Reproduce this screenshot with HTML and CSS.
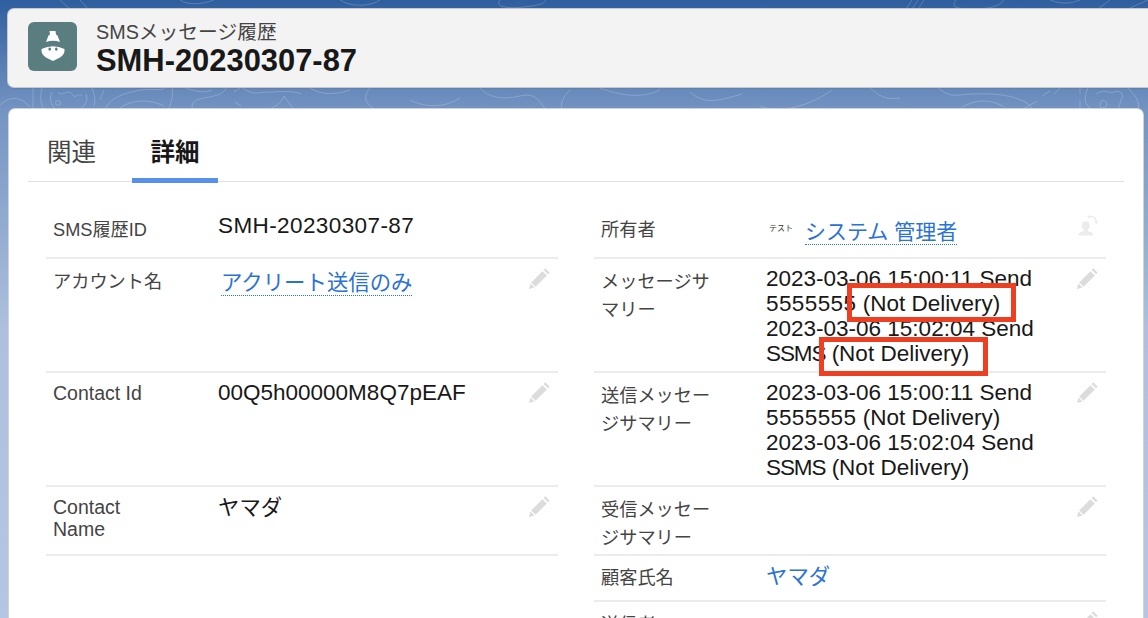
FILE: index.html
```html
<!DOCTYPE html>
<html lang="ja">
<head>
<meta charset="utf-8">
<title>SMH-20230307-87</title>
<link rel="stylesheet" href="styles.css">
</head>
<body>
<svg class="topo" viewBox="0 0 1148 120" aria-hidden="true">
  <g fill="none" stroke="#ffffff" stroke-opacity=".2" stroke-width="1">
    <path d="M0 105c8-8 20-10 30 2M33 88v20M42 88c-2 8-2 14 2 22"/>
    <path d="M52 92c-4 8 0 20 14 20s24-8 20-18M58 92c4 6 10-4 14 2s6-2 10 2"/>
    <circle cx="58" cy="103" r="2.500"/>
    <path d="M92 88c2 6 4 10 2 18M104 90l-4 10M106 108c4-10 20-16 36-18s22 2 22-3M118 110c10-10 30-12 46-4M172 88c2 8-2 18-4 22"/>
    <path d="M186 88c10 4 20 5 26 2M226 88c-2 6-10 8-22 10s-12 6-12 12M240 88l-6 4M235 102l6 4"/>
    <path d="M243 88c10 8 16 4 26 4s24-2 32 2M268 110c6-4 12-4 16-14 4 6 8 10 10 14M310 88c10 6 22 8 40 2"/>
    <path d="M370 88c-8 10-4 16 6 22M410 100c16 8 34 8 50-2M480 88c8 10 24 12 40 8s20 6 26 14M570 90c-8 8-10 14-8 20"/>
    <path d="M600 88c16 6 40 12 60 2M690 92c16 14 30 8 52 2M760 106c20 8 50 0 72-16M870 88c10 8 14 12 30 10"/>
    <path d="M938 88c8 6 12 8 22 7s62-6 74 16M960 109c10-8 28-12 44-2M1023 109l14-8M1042 96l8-5M1060 88l-6 6"/>
    <path d="M1080 88v6M1080 100v10M1088 88c-6 12-2 22 10 22M1096 94c10-6 12 0 18-2s10 2 8 6-2 6-4 12M1103 100c-4 2-4 8 0 8s6-6 0-8M1128 88c8 8 12 14 10 22"/>
    <path d="M340 0c10 7 30 7 40 0M500 0c-6 7 8 9 24 7s20-3 22-7M956 0c-6 8 2 9 18 9s26-3 30-9"/>
    <path d="M1050 0c14 5 22 3 30 0M1110 0l-12 9M1148 0l-20 9M180 0c8 5 20 5 34 0M60 0l10 9M80 0l8 9M912 0l-6 9M918 0l-6 9M924 0l-6 9"/>
  </g>
</svg>

<header class="head-card">
  <div class="head-icon">
    <svg width="24" height="30" viewBox="0 0 24 30" aria-hidden="true">
      <path fill="#fff" d="M8.500 0h6l.5 3.500 1.500 1 2.500 6.500q-7-2.500-14 0l2.500-6.500 1.500-1z"/>
      <path fill="#fff" fill-rule="evenodd" d="M.5 18Q12 12.500 23.500 18 24 23.500 19 26.500L12 30l-7-3.500Q0 23.500 .5 18zM8.700 16.500a1.300 1.600 0 1 0 .01 0zM15.300 16.500a1.300 1.600 0 1 0 .01 0z"/>
    </svg>
  </div>
  <div class="head-text">
    <div class="head-type">SMSメッセージ履歴</div>
    <h1 class="head-name">SMH-20230307-87</h1>
  </div>
</header>

<main class="card">
  <nav class="tabs">
    <a class="tab">関連</a>
    <a class="tab tab-active">詳細</a>
  </nav>
  <section class="fields">
    <div class="field field-first">
      <div class="label label-low">SMS履歴ID</div>
      <div class="value value-high value-id">SMH-20230307-87</div>
    </div>
    <div class="field field-first">
      <div class="label label-low">所有者</div>
      <div class="value value-owner"><span class="mini">テスト</span><a class="link dotted">システム 管理者</a></div>
      <svg class="edit" viewBox="0 0 20 20" aria-hidden="true"><use href="#owner-ico"/></svg>
    </div>

    <div class="field">
      <div class="label">アカウント名</div>
      <div class="value value-cjk value-account"><a class="link dotted">アクリート送信のみ</a></div>
      <svg class="edit" viewBox="0 0 20 20" aria-hidden="true"><use href="#pencil"/></svg>
    </div>
    <div class="field">
      <div class="label">メッセージサマリー</div>
      <div class="value">2023-03-06 15:00:11 Send<br><span class="wide">5555555</span> (Not Delivery)<br>2023-03-06 15:02:04 Send<br><span class="tight">SSMS</span> (Not Delivery)</div>
      <svg class="edit" viewBox="0 0 20 20" aria-hidden="true"><use href="#pencil"/></svg>
      <span class="mark mark-one"></span>
      <span class="mark mark-two"></span>
    </div>

    <div class="field">
      <div class="label label-latin">Contact Id</div>
      <div class="value">00Q5h00000M8Q7pEAF</div>
      <svg class="edit" viewBox="0 0 20 20" aria-hidden="true"><use href="#pencil"/></svg>
    </div>
    <div class="field">
      <div class="label">送信メッセージサマリー</div>
      <div class="value">2023-03-06 15:00:11 Send<br><span class="wide">5555555</span> (Not Delivery)<br>2023-03-06 15:02:04 Send<br><span class="tight">SSMS</span> (Not Delivery)</div>
      <svg class="edit" viewBox="0 0 20 20" aria-hidden="true"><use href="#pencil"/></svg>
    </div>

    <div class="field">
      <div class="label label-latin">Contact<br>Name</div>
      <div class="value value-cjk">ヤマダ</div>
      <svg class="edit" viewBox="0 0 20 20" aria-hidden="true"><use href="#pencil"/></svg>
    </div>
    <div class="field">
      <div class="label">受信メッセージサマリー</div>
      <div class="value"></div>
      <svg class="edit" viewBox="0 0 20 20" aria-hidden="true"><use href="#pencil"/></svg>
    </div>

    <div class="spacer"></div>
    <div class="field field-short">
      <div class="label">顧客氏名</div>
      <div class="value value-cjk"><a class="link">ヤマダ</a></div>
    </div>

    <div class="spacer"></div>
    <div class="field field-last">
      <div class="label">送信者</div>
      <div class="value value-cjk value-sender"><a class="link">システム</a></div>
      <svg class="edit" viewBox="0 0 20 20" aria-hidden="true"><use href="#pencil"/></svg>
    </div>
  </section>
</main>

<svg class="defs" aria-hidden="true">
  <defs>
    <symbol id="pencil" viewBox="0 0 20 20">
      <path fill="#dcdcdc" d="M14.800 1.200l4 4-1.500 1.500-4-4zM12.200 3.800l4 4L6 18l-4-4zM1.300 15l3.700 3.700L0 20z"/>
    </symbol>
    <symbol id="owner-ico" viewBox="0 0 20 20">
      <path fill="#ececec" d="M8 6.500c2.300 0 3.600 1.800 3.600 4 0 1.700-.8 3-1.700 3.600v1.300c2.300.8 4.600 1.500 4.600 3v1.100H1.500v-1.100c0-1.500 2.300-2.200 4.600-3v-1.300c-.9-.6-1.700-1.900-1.700-3.600 0-2.200 1.300-4 3.600-4z"/>
      <path fill="none" stroke="#ececec" stroke-width="1.300" d="M11 2.500c3-1 6 .5 6.500 4"/>
      <path fill="#ececec" d="M15.500 6.500h4l-2 2.500zM11.500 .8v3.400L9 2.500z"/>
    </symbol>
  </defs>
</svg>
</body>
</html>
```

FILE: styles.css
```css
* { box-sizing: border-box; }
html, body { height: 100%; }
body {
  margin: 0;
  width: 1148px;
  height: 618px;
  overflow: hidden;
  position: relative;
  padding: 9px 0 0 8px;
  font-family: "Liberation Sans", "Noto Sans CJK JP", sans-serif;
  color: #181818;
  background: linear-gradient(180deg, #2f5e9f 0, #7494c2 110px, #aec0dd 330px, #b4c6e1 618px);
}
.topo { position: absolute; left: 0; top: 0; width: 1148px; height: 120px; }
.defs { position: absolute; width: 0; height: 0; }
.head-card {
  position: relative;
  width: 1160px;
  height: 78px;
  display: flex;
  align-items: center;
  gap: 19px;
  padding: 0 0 0 20px;
  background: #f3f3f3;
  border-radius: 6px;
  box-shadow: 0 0 0 1px #c9c9c9, 0 1px 2px rgba(0,0,0,.2);
}
.head-icon {
  width: 49px;
  height: 49px;
  margin-top: -4px;
  border-radius: 6px;
  background: #5a7d80;
  display: flex;
  align-items: center;
  justify-content: center;
}
.head-text { display: flex; flex-direction: column; gap: 3px; }
.head-type { font-size: 19.750px; line-height: 22px; color: #444; }
.head-name { margin: 0; font-size: 30.900px; line-height: 30px; font-weight: 700; color: #181818; }
.card {
  position: relative;
  width: 1134px;
  height: 520px;
  margin: 22px 0 0 1px;
  padding: 0 19px;
  background: #fff;
  border-radius: 6px;
  box-shadow: 0 0 0 1px #cfd3d9;
  overflow: hidden;
}
.tabs {
  display: flex;
  height: 73px;
  padding-left: 19px;
  gap: 36px;
  border-bottom: 1px solid #e1e1e1;
}
.tab {
  position: relative;
  display: flex;
  align-items: center;
  height: 73px;
  padding-top: 9px;
  font-size: 24.500px;
  color: #444;
}
.tab-active {
  padding: 9px 18.500px 0;
  font-weight: 700;
  color: #181818;
}
.tab-active::after {
  content: "";
  position: absolute;
  left: 0;
  right: 0;
  bottom: -1px;
  height: 5px;
  background: #5590ea;
}
.fields {
  display: grid;
  grid-template-columns: 512px 512px;
  grid-template-rows: 77px 114px 114px 69px 46px 40px;
  column-gap: 36px;
  margin: 0 0 0 18px;
  width: 1060px;
}
.field {
  position: relative;
  display: grid;
  grid-template-columns: 165px 1fr;
  padding: 0 7px;
  border-bottom: 2px solid #ececec;
}
.field-last { border-bottom: 0; }
.label {
  padding: 9px 45px 0 0;
  font-size: 18.200px;
  line-height: 28px;
  color: #444;
  overflow-wrap: anywhere;
}
.label-low { padding-top: 34px; }
.label-latin { padding-top: 9px; font-size: 19.500px; line-height: 22px; }
.field-short .label { padding-top: 8px; }
.value {
  padding-top: 7px;
  font-size: 22.500px;
  line-height: 25px;
  color: #181818;
}
.value-high { padding-top: 31px; }
.value-id { letter-spacing: .4px; }
.value-cjk { padding-top: 9px; font-size: 21.400px; }
.value-owner { padding-top: 37px; display: flex; align-items: flex-start; font-size: 21px; }
.value-account { padding-left: 3px; padding-top: 12px; }
.value-sender { padding: 14px 0 0 102px; }
.wide { letter-spacing: .4px; }
.tight { letter-spacing: -1.100px; }
.link { color: #2a72d4; }
.dotted { border-bottom: 1px dotted #2a72d4; }
.mini { font-size: 8px; line-height: 10px; margin: 5px 12px 0 3px; color: #333; }
.edit { position: absolute; right: 7px; top: 8px; width: 22px; height: 22px; }
.field-first .edit { top: 32px; }
.mark {
  position: absolute;
  border: 5px solid #ed4023;
}
.mark-one { left: 253px; top: 24px; width: 169px; height: 39px; }
.mark-two { left: 225px; top: 78px; width: 169px; height: 39px; }
```
